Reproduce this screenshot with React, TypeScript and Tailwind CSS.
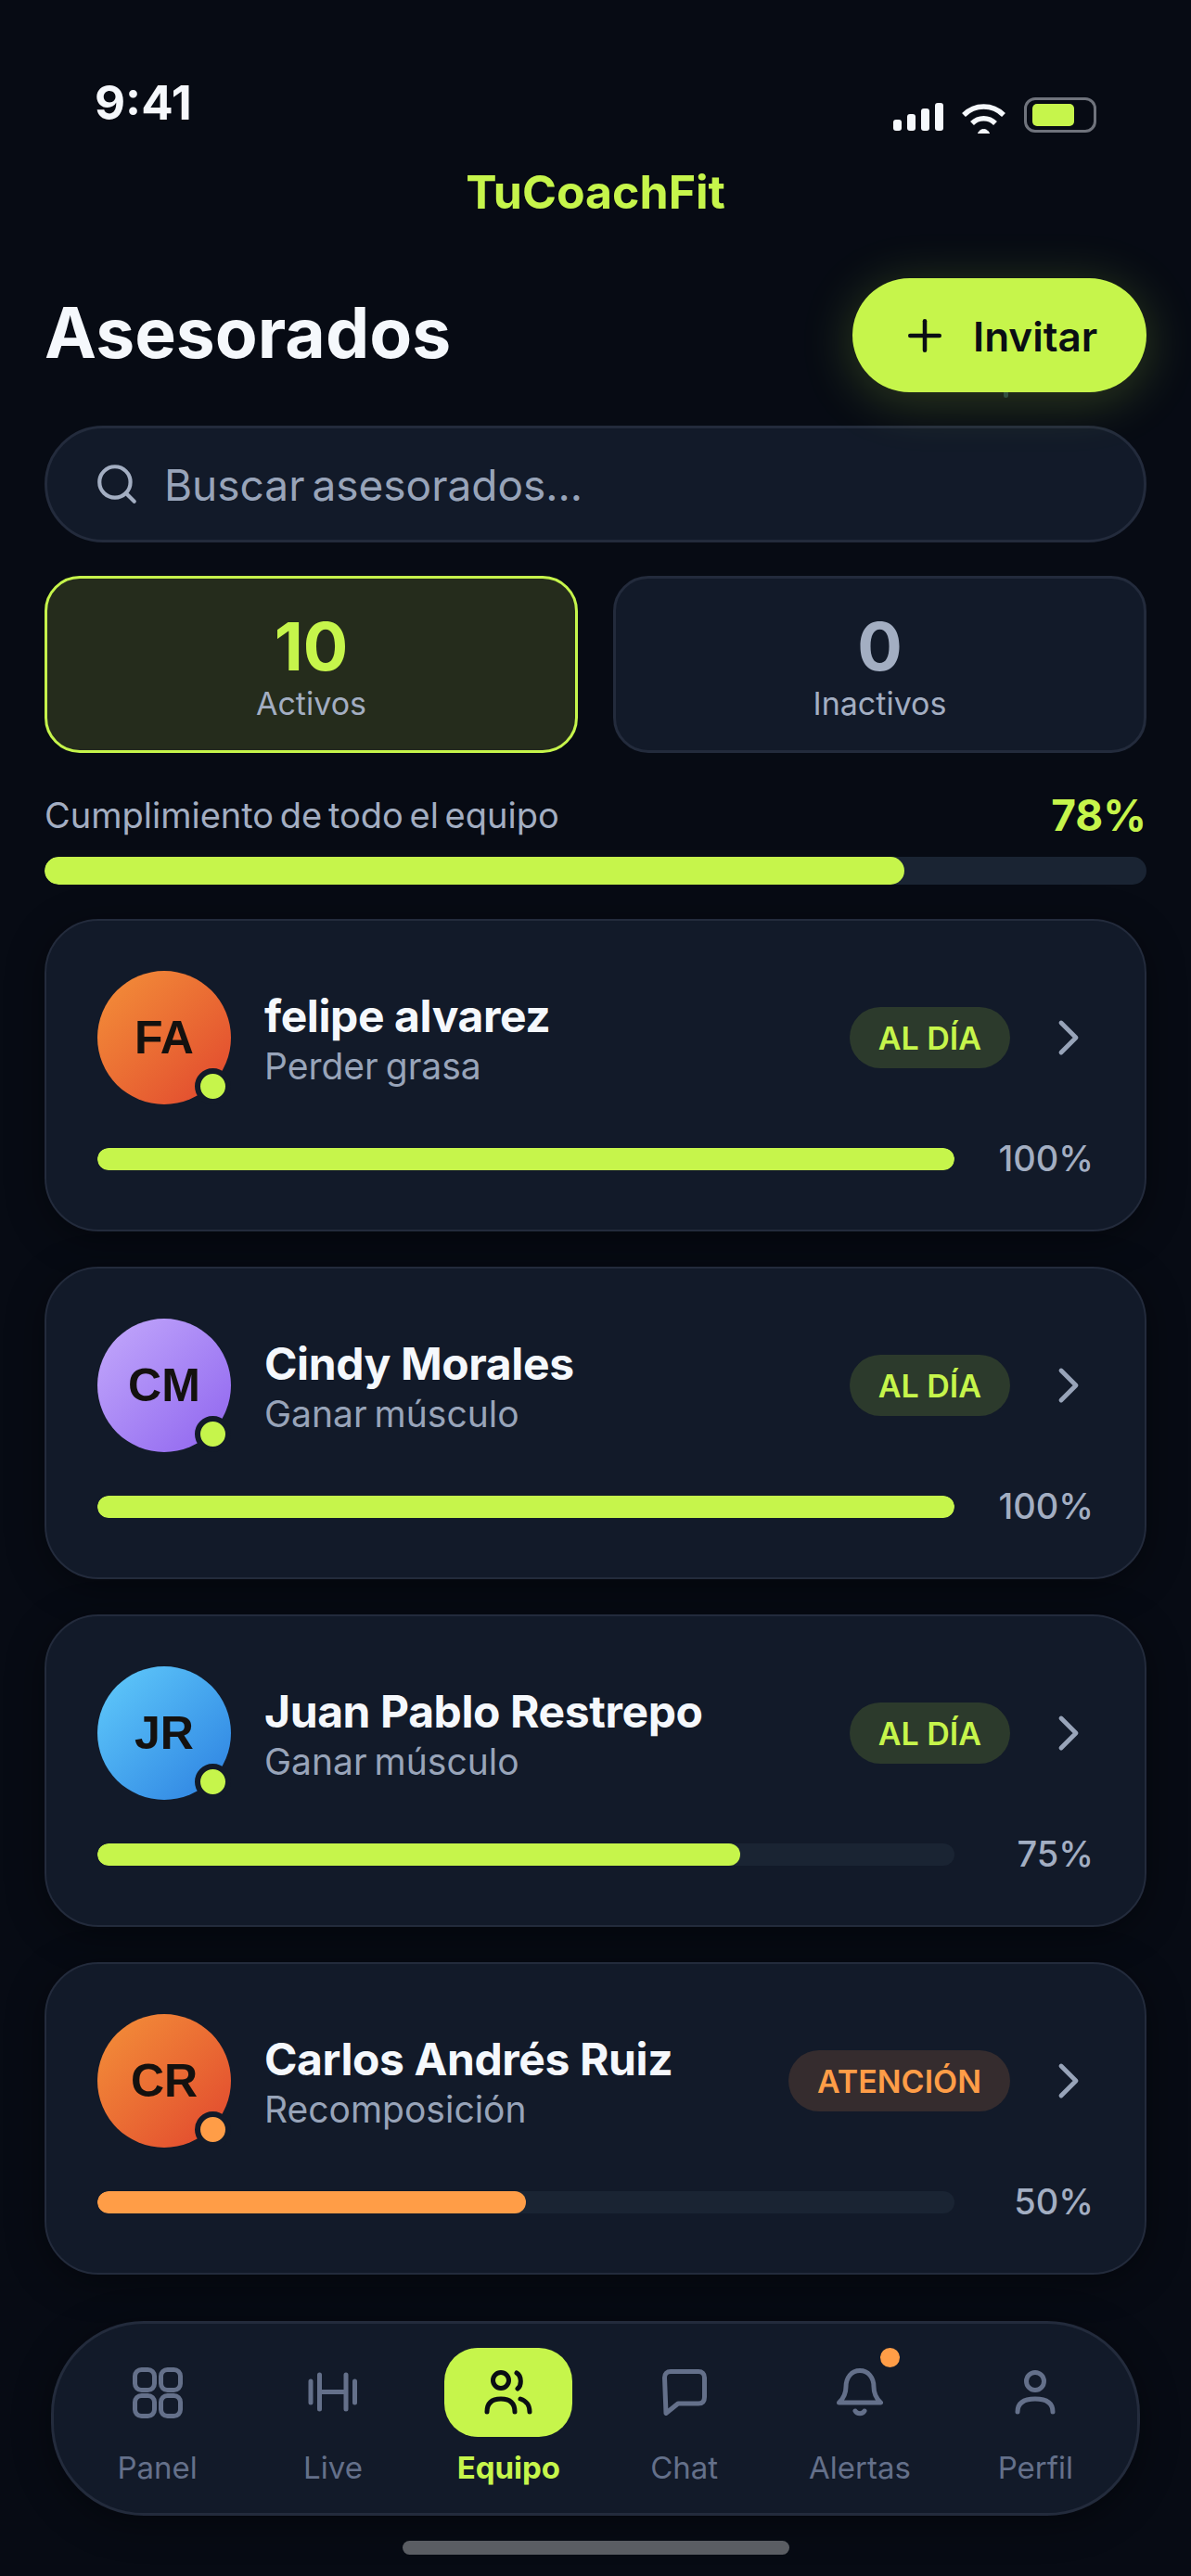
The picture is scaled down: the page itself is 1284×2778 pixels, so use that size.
import React from 'react';
import { ChevronRight, Plus, Search } from 'lucide-react';

const clients = [
  { initials: 'FA', name: 'felipe alvarez', goal: 'Perder grasa', status: 'AL DÍA', progress: 100, avatar: 'bg-gradient-to-br from-[#f39039] to-[#e0432e]' },
  { initials: 'CM', name: 'Cindy Morales', goal: 'Ganar músculo', status: 'AL DÍA', progress: 100, avatar: 'bg-gradient-to-br from-[#c4a9fb] to-[#8f62ee]' },
  { initials: 'JR', name: 'Juan Pablo Restrepo', goal: 'Ganar músculo', status: 'AL DÍA', progress: 75, avatar: 'bg-gradient-to-br from-[#62ccfb] to-[#2d7fe0]' },
  { initials: 'CR', name: 'Carlos Andrés Ruiz', goal: 'Recomposición', status: 'ATENCIÓN', progress: 50, avatar: 'bg-gradient-to-br from-[#f39039] to-[#e0432e]' },
];

function PanelIcon() {
  return (
    <svg width="54" height="55" viewBox="0 0 54 55" fill="none" stroke="currentColor" strokeWidth="5">
      <rect x="2.5" y="2.5" width="21" height="22" rx="7" />
      <rect x="30.5" y="2.5" width="21" height="22" rx="7" />
      <rect x="2.5" y="30.5" width="21" height="22" rx="7" />
      <rect x="30.5" y="30.5" width="21" height="22" rx="7" />
    </svg>
  );
}

function LiveIcon() {
  return (
    <svg width="54" height="44" viewBox="0 0 54 44" fill="none" stroke="currentColor" strokeWidth="5" strokeLinecap="round">
      <path d="M3 10V33M12.500 3V40M41 3V40M50.500 10V33M12.500 21.500H41" />
    </svg>
  );
}

function TeamIcon() {
  return (
    <svg width="52" height="48" viewBox="0 0 52 48" fill="none" stroke="currentColor" strokeWidth="5" strokeLinecap="round">
      <circle cx="18" cy="11" r="8.500" />
      <path d="M3 45C3 35 9 31 18 31C27 31 33 35 33 45" />
      <path d="M39 31C45 33 49 38 49 45" />
      <path d="M35 3C40 6 41 16 36 20" />
    </svg>
  );
}

function ChatIcon() {
  return (
    <svg width="48" height="50" viewBox="0 0 48 50" fill="none" stroke="currentColor" strokeWidth="5" strokeLinejoin="round">
      <path d="M9 2.500H39C43 2.500 45.500 5 45.500 9V30C45.500 35 43 37 39 37H17L4 47.500L2.500 9C2.500 5 5 2.500 9 2.500Z" />
    </svg>
  );
}

function BellIcon() {
  return (
    <svg width="50" height="52" viewBox="0 0 50 52" fill="none" stroke="currentColor" strokeWidth="5" strokeLinejoin="round" strokeLinecap="round">
      <path d="M25 2.500C34 2.500 40 10 40 20C40 27 42 32 47.500 37H2.500C8 32 10 27 10 20C10 10 16 2.500 25 2.500Z" />
      <path d="M20 46C22 49.500 28 49.500 30 46" />
    </svg>
  );
}

function ProfileIcon() {
  return (
    <svg width="44" height="48" viewBox="0 0 44 48" fill="none" stroke="currentColor" strokeWidth="5" strokeLinecap="round">
      <circle cx="22" cy="12" r="9.500" />
      <path d="M3 45C3 35 10 31 22 31C34 31 41 35 41 45" />
    </svg>
  );
}

const navItems = [
  { label: 'Panel', icon: <PanelIcon /> },
  { label: 'Live', icon: <LiveIcon /> },
  { label: 'Equipo', icon: <TeamIcon />, active: true },
  { label: 'Chat', icon: <ChatIcon /> },
  { label: 'Alertas', icon: <BellIcon />, dot: true },
  { label: 'Perfil', icon: <ProfileIcon /> },
];

function ClientCard({ client }: { client: (typeof clients)[number] }) {
  const warning = client.status === 'ATENCIÓN';
  return (
    <div className="h-[337px] rounded-[58px] border-2 border-[#232b3c] bg-[#121a29] px-[55px] pt-[54px] shadow-[0_8px_40px_rgba(0,0,0,0.4)]">
      <div className="flex h-[144px] items-center">
        <div className={`relative flex h-[144px] w-[144px] shrink-0 items-center justify-center rounded-full ${client.avatar}`}>
          <span className="font-['Liberation_Sans'] text-[50px] font-bold text-[#14110f]">{client.initials}</span>
          <span className={`absolute bottom-0 right-0 h-[39px] w-[39px] rounded-full border-[6px] border-[#121a29] ${warning ? 'bg-[#ff9d47]' : 'bg-[#c6f54b]'}`}></span>
        </div>
        <div className="ml-[36px] mt-[3px] flex-1">
          <p className="text-[48px] leading-[58px] font-bold tracking-[-0.4px] text-[#f5f8fc]">{client.name}</p>
          <p className="text-[39px] leading-[50px] text-[#98a4b9] [word-spacing:-3px]">{client.goal}</p>
        </div>
        <span className={`flex h-[66px] items-center rounded-full px-[31px] text-[34px] font-semibold ${warning ? 'bg-[#352c2e] text-[#ff9d47]' : 'bg-[#2c3a2c] text-[#c6f54b]'}`}>
          {client.status}
        </span>
        <ChevronRight size={64} strokeWidth={1.800} className="ml-[31px] -mr-[5px] text-[#98a4b9]" />
      </div>
      <div className="mt-[30px] flex items-center">
        <div className="h-[24px] w-[924px] overflow-hidden rounded-full bg-[#1a2433]">
          <div className={`h-full rounded-full ${warning ? 'bg-[#ff9d47]' : 'bg-[#c6f54b]'}`} style={{ width: `${client.progress}%` }}></div>
        </div>
        <span className="flex-1 text-right text-[38px] font-medium text-[#a3aec2]">{client.progress}%</span>
      </div>
    </div>
  );
}

export default function App() {
  return (
    <div className="flex h-[2778px] w-[1284px] flex-col overflow-hidden bg-[#070b14] font-['Inter',sans-serif]">
      {/* Status bar */}
      <div className="flex h-[160px] justify-between pl-[102px] pr-[102px] pt-[84px]">
        <span className="text-[51px] leading-[54px] font-bold text-[#f5f8fc]">9:41</span>
        <div className="mt-[21px] flex h-[38px] items-start gap-[20px]">
          <svg className="mt-[6px]" width="54" height="30" viewBox="0 0 54 30" fill="#f5f8fc">
            <rect x="0" y="18" width="9" height="12" rx="3" />
            <rect x="15" y="12" width="9" height="18" rx="3" />
            <rect x="30" y="6" width="9" height="24" rx="3" />
            <rect x="45" y="0" width="9" height="30" rx="3" />
          </svg>
          <svg className="mt-[6px]" width="47" height="33" viewBox="0 0 47 33" fill="none" stroke="#f5f8fc" strokeWidth="5.500">
            <path d="M2 13C14 1 33 1 45 13" />
            <path d="M11 22C18 15 29 15 36 22" />
            <path d="M17.500 33C19 27 28 27 29.500 33Z" fill="#f5f8fc" strokeWidth="1" />
          </svg>
          <div className="flex h-[38px] w-[78px] items-center rounded-[12px] border-[3px] border-[#6f737c] pl-[6px]">
            <div className="h-[24px] w-[45px] rounded-[5px] bg-[#c6f54b]"></div>
          </div>
        </div>
      </div>

      <div className="flex h-[94px] items-center justify-center">
        <span className="text-[50px] font-bold text-[#c6f54b]">TuCoachFit</span>
      </div>

      <div className="mt-[46px] flex h-[123px] items-center justify-between px-[48px]">
        <h1 className="pb-[4px] text-[75px] font-bold text-[#f5f8fc]">Asesorados</h1>
        <button className="relative flex h-[123px] w-[317px] items-center rounded-full bg-[#c6f54b] pl-[51px] text-[44px] font-semibold text-[#0a0e14] shadow-[0_8px_56px_rgba(198,245,75,0.22)]">
          <Plus size={54} strokeWidth={2} />
          <span className="ml-[25px] mt-[2px]">Invitar</span>
          <span className="absolute left-[163px] top-full h-[6px] w-[5px] rounded-b-full bg-[#33503f]"></span>
        </button>
      </div>

      <div className="mx-[48px] mt-[36px] flex h-[126px] items-center rounded-full border-[3px] border-[#232b3c] bg-[#121a29] pl-[50px]">
        <Search size={50} strokeWidth={2} className="text-[#a3aec2]" />
        <span className="ml-[26px] mt-[2px] text-[46px] text-[#98a4b9] [word-spacing:-5px]">Buscar asesorados...</span>
      </div>

      <div className="mx-[48px] mt-[36px] grid h-[191px] grid-cols-2 gap-[38px]">
        <div className="flex flex-col items-center rounded-[38px] border-[3px] border-[#c6f54b] bg-[#252c1c] pt-[33px]">
          <span className="text-[72px] leading-[80px] font-bold text-[#c6f54b]">10</span>
          <span className="text-[34px] leading-[44px] text-[#a3aec2]">Activos</span>
        </div>
        <div className="flex flex-col items-center rounded-[38px] border-[3px] border-[#232b3c] bg-[#121a29] pt-[33px]">
          <span className="text-[72px] leading-[80px] font-bold text-[#a3aec2]">0</span>
          <span className="text-[34px] leading-[44px] text-[#a3aec2]">Inactivos</span>
        </div>
      </div>

      <div className="mx-[48px] mt-[42px] flex h-[50px] items-center justify-between">
        <span className="text-[38px] text-[#a3aec2] [word-spacing:-4px]">Cumplimiento de todo el equipo</span>
        <span className="text-[46px] font-bold text-[#c6f54b]">78%</span>
      </div>
      <div className="mx-[48px] mt-[20px] h-[30px] overflow-hidden rounded-full bg-[#1a2433]">
        <div className="h-full w-[78%] rounded-full bg-[#c6f54b]"></div>
      </div>

      <div className="mx-[48px] mt-[37px] flex flex-col gap-[38px]">
        {clients.map((client) => (
          <ClientCard key={client.initials} client={client} />
        ))}
      </div>

      {/* Bottom nav */}
      <nav className="mx-[55px] mt-[50px] grid h-[210px] grid-cols-6 rounded-[100px] border-[3px] border-[#232b3c] bg-[#121a29] pl-[17px] pr-[15px] shadow-[0_8px_40px_rgba(0,0,0,0.4)]">
        {navItems.map((item) => (
          <div key={item.label} className="flex flex-col items-center pt-[26px]">
            <div className={`relative flex h-[96px] w-[138px] items-center justify-center rounded-[36px] ${item.active ? 'bg-[#c6f54b] text-[#0a0e14]' : 'text-[#64708a]'}`}>
              {item.icon}
              {item.dot && <span className="absolute right-[26px] top-0 h-[21px] w-[21px] rounded-full bg-[#ff9d47]"></span>}
            </div>
            <span className={`mt-[9px] text-[33px] leading-[48px] ${item.active ? 'font-bold text-[#c6f54b]' : 'text-[#64708a]'}`}>{item.label}</span>
          </div>
        ))}
      </nav>

      <div className="mx-auto mt-[27px] h-[15px] w-[417px] rounded-full bg-[#5a5d63]"></div>
    </div>
  );
}
